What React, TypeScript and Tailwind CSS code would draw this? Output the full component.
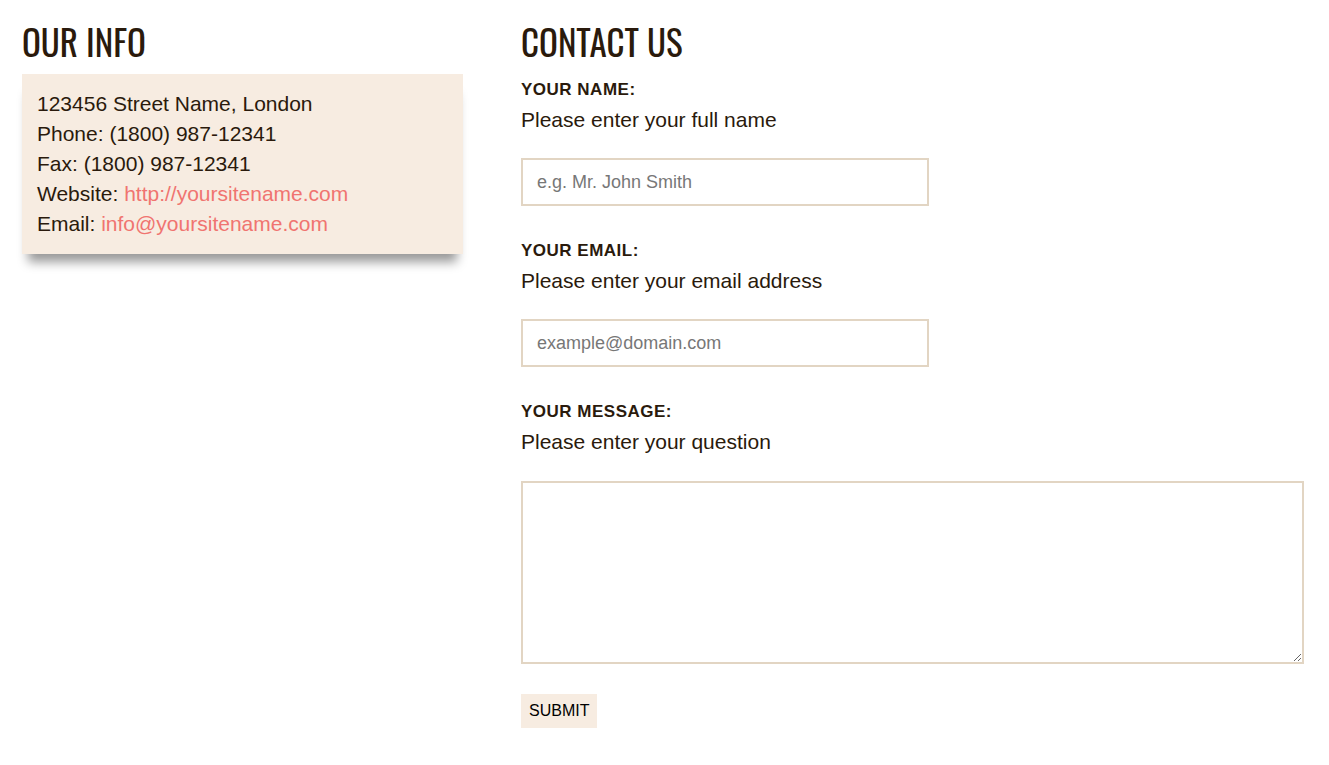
import { useState } from 'react';

const heading = "font-['Oswald','Liberation_Sans_Narrow',sans-serif] text-[35px] leading-[44px] text-[#2a1a0c] uppercase";
const label = 'text-[17px] leading-5 font-bold uppercase text-[#2a1a0c] tracking-[0.5px]';
const desc = 'mt-[5px] text-[21px] leading-[30px] text-[#2a1a0c]';
const field =
  'mt-[23px] block w-[408px] h-12 border-2 border-[#e2d5c3] bg-white px-[14px] text-[18px] text-[#333] placeholder:text-[#777] outline-none';

export default function App() {
  const [name, setName] = useState('');
  const [email, setEmail] = useState('');
  const [message, setMessage] = useState('');

  return (
    <div className="min-h-screen bg-white font-['Liberation_Sans',Arial,sans-serif]">
      <div className="flex gap-[58px] pl-[22px] pr-[25px] pt-[19px]">
        <div className="w-[441px] shrink-0">
          <h2 className={heading}>Our Info</h2>
          <div className="mt-[11px] bg-[#f7ece1] p-[15px] text-[21px] leading-[30px] text-[#2a1a0c] shadow-[0_14px_10px_-6px_rgba(0,0,0,0.4)]">
            <p>123456 Street Name, London</p>
            <p>Phone: (1800) 987-12341</p>
            <p>Fax: (1800) 987-12341</p>
            <p>
              Website: <a href="#" className="text-[#f07470]">http://yoursitename.com</a>
            </p>
            <p>
              Email: <a href="#" className="text-[#f07470]">info@yoursitename.com</a>
            </p>
          </div>
        </div>

        <div className="flex-1">
          <h2 className={heading}>Contact Us</h2>
          <form onSubmit={(e) => e.preventDefault()} className="mt-[17px]">
            <div className={label}>Your Name:</div>
            <p className={desc}>Please enter your full name</p>
            <input
              type="text"
              value={name}
              onChange={(e) => setName(e.target.value)}
              placeholder="e.g. Mr. John Smith"
              className={field}
            />

            <div className={`${label} mt-[35px]`}>Your Email:</div>
            <p className={desc}>Please enter your email address</p>
            <input
              type="email"
              value={email}
              onChange={(e) => setEmail(e.target.value)}
              placeholder="example@domain.com"
              className={field}
            />

            <div className={`${label} mt-[35px]`}>Your Message:</div>
            <p className={desc}>Please enter your question</p>
            <textarea
              value={message}
              onChange={(e) => setMessage(e.target.value)}
              className="mt-6 block h-[183px] w-full border-2 border-[#e2d5c3] bg-white p-3 text-[18px] outline-none"
            />

            <button
              type="submit"
              className="mt-[30px] block h-[34px] bg-[#f7ece1] px-2 text-[16px] uppercase text-black"
            >
              Submit
            </button>
          </form>
        </div>
      </div>
    </div>
  );
}
